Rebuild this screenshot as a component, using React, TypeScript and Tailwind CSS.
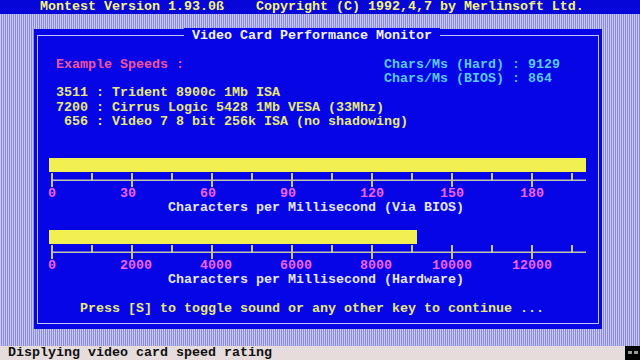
const ROW = 'h-[14.4px] leading-[14.4px] whitespace-pre'

// place text snippets at DOS columns, starting from column `start`
function at(items: [number, string][], start = 4) {
  let s = ''
  for (const [col, text] of items) {
    s = s.padEnd(col - start, ' ') + text
  }
  return s
}

function Axis() {
  const majors = [0, 1, 2, 3, 4, 5, 6].map((k) => 20 + 80 * k)
  const minors = [0, 1, 2, 3, 4, 5, 6].map((k) => 60 + 80 * k)
  return (
    <svg width="568" height="14.4" className="block">
      <line x1="20" y1="7.2" x2="554" y2="7.2" stroke="#c4c4b0" strokeWidth="1.5" />
      {majors.map((x) => (
        <line key={x} x1={x} y1="0" x2={x} y2="14.4" stroke="#c4c4b0" strokeWidth="2" />
      ))}
      {minors.map((x) => (
        <line key={x} x1={x} y1="0" x2={x} y2="7.2" stroke="#c4c4b0" strokeWidth="2" />
      ))}
    </svg>
  )
}

function Meter({ width, labels, caption }: { width: number; labels: [number, string][]; caption: string }) {
  return (
    <>
      <div className={`${ROW} pl-[17px]`}>
        <div className="h-[14px] bg-[#f0f052]" style={{ width }} />
      </div>
      <div className={ROW}>
        <Axis />
      </div>
      <div className={`${ROW} text-[#f062f0]`}>{at(labels)}</div>
      <div className={`${ROW} text-[#e6e6fa]`}>{at([[21, caption]])}</div>
    </>
  )
}

export default function App() {
  return (
    <div className="w-[640px] h-[360px] flex flex-col font-['Liberation_Mono',monospace] font-bold text-[13.333px]">
      <div className={`${ROW} bg-[#0606d8] text-[#f4f47a]`}>
        {at([[5, 'Montest Version 1.93.0ß'], [32, 'Copyright (C) 1992,4,7 by Merlinsoft Ltd.']], 0)}
      </div>

      <div className="flex-1 pt-[14.4px] pl-[34px] bg-[repeating-linear-gradient(90deg,#c8c8f6_0px,#c8c8f6_1px,#8c8cdc_1px,#8c8cdc_2px)]">
        <div className="relative w-[568px] h-[300px] bg-[#0505e6]">
          <div className="absolute left-[3px] right-[3px] top-[6px] bottom-[5px] border border-[#c4c4fa]" />
          <div className="relative -ml-[2px] w-[570px]">
            <div className={`${ROW} text-[#f4f4ff]`}>
              {at([[23, '']])}
              <span className="bg-[#0505e6]"> Video Card Performance Monitor </span>
            </div>
            <div className={ROW} />
            <div className={ROW}>
              <span className="text-[#f2549c]">{at([[7, 'Example Speeds :']])}</span>
              <span className="text-[#5cc8f8]">{at([[48, 'Chars/Ms (Hard) : 9129']], 23)}</span>
            </div>
            <div className={`${ROW} text-[#5cc8f8]`}>{at([[48, 'Chars/Ms (BIOS) : 864']])}</div>
            <div className={`${ROW} text-[#e8e878]`}>{at([[7, '3511 : Trident 8900c 1Mb ISA']])}</div>
            <div className={`${ROW} text-[#e8e878]`}>{at([[7, '7200 : Cirrus Logic 5428 1Mb VESA (33Mhz)']])}</div>
            <div className={`${ROW} text-[#e8e878]`}>{at([[7, ' 656 : Video 7 8 bit 256k ISA (no shadowing)']])}</div>
            <div className={ROW} />
            <div className={ROW} />
            <Meter
              width={537}
              labels={[[6, '0'], [15, '30'], [25, '60'], [35, '90'], [45, '120'], [55, '150'], [65, '180']]}
              caption="Characters per Millisecond (Via BIOS)"
            />
            <div className={ROW} />
            <Meter
              width={368}
              labels={[[6, '0'], [15, '2000'], [25, '4000'], [35, '6000'], [45, '8000'], [54, '10000'], [64, '12000']]}
              caption="Characters per Millisecond (Hardware)"
            />
            <div className={ROW} />
            <div className={`${ROW} text-[#e8e878]`}>
              {at([[10, 'Press [S] to toggle sound or any other key to continue ...']])}
            </div>
          </div>
        </div>
      </div>

      <div className="h-[14.4px] flex bg-[#e6dcdc] text-[#101010]">
        <div className={`${ROW} flex-1`}>{at([[1, 'Displying video card speed rating']], 0)}</div>
        <div className="w-[15px] h-full bg-black flex items-center justify-center gap-[2px]">
          <div className="w-[4px] h-[3px] bg-[#9a9a9a]" />
          <div className="w-[4px] h-[3px] bg-[#9a9a9a]" />
        </div>
      </div>
    </div>
  )
}
